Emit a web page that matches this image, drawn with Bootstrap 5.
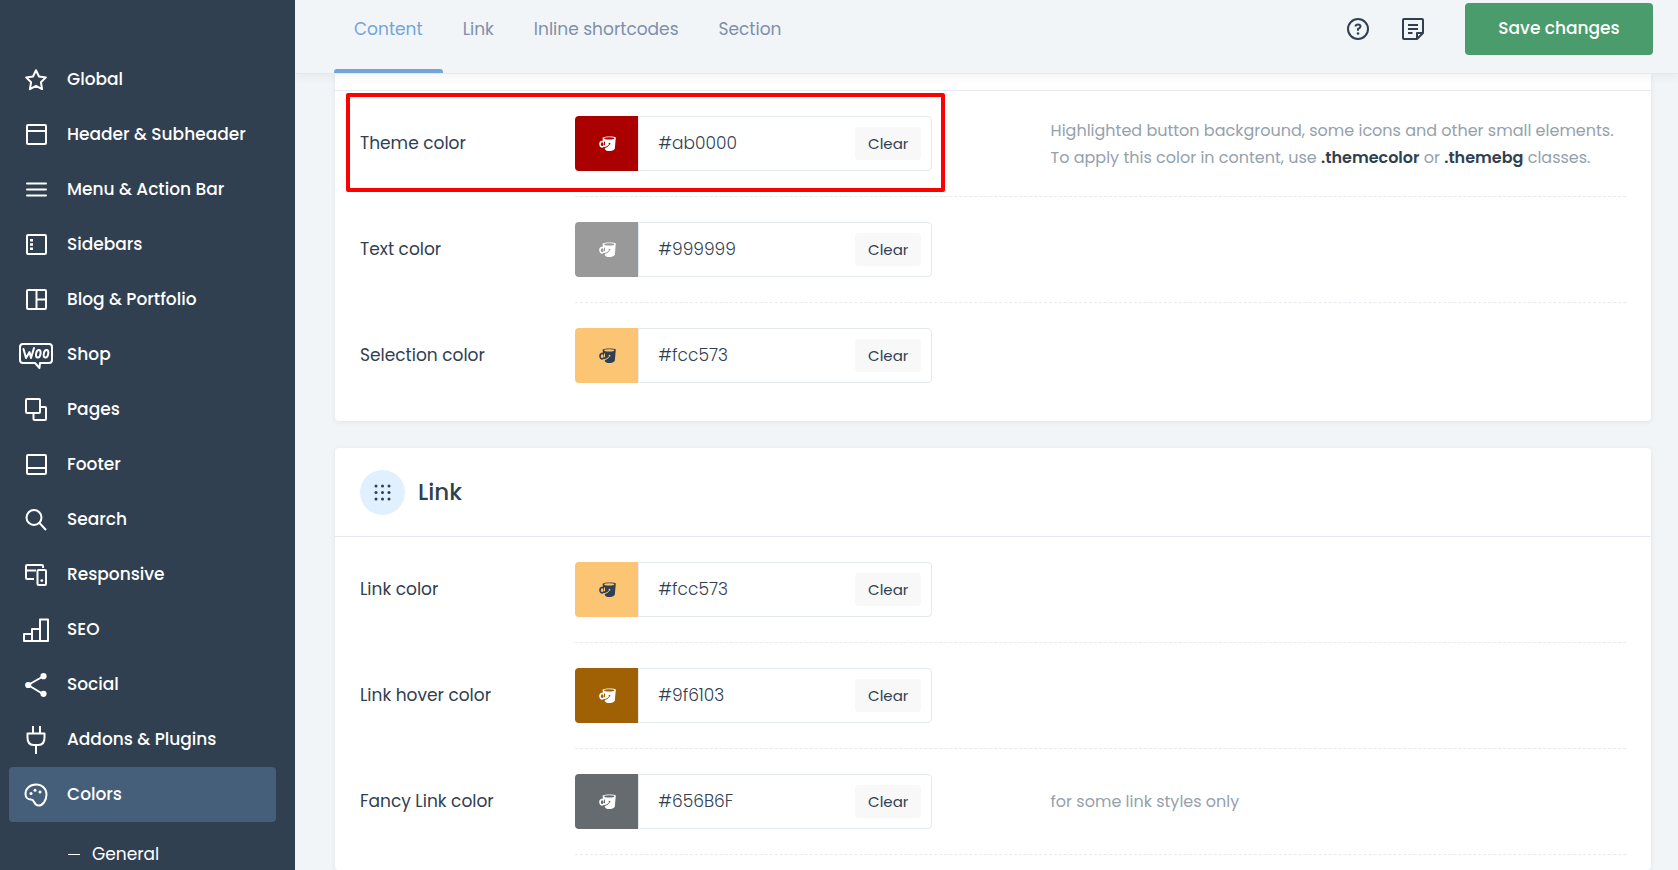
<!DOCTYPE html>
<html lang="en">
<head>
<meta charset="utf-8">
<meta name="viewport" content="width=device-width, initial-scale=1">
<title>Theme options – Colors</title>
<link href="https://cdn.jsdelivr.net/npm/bootstrap@5.3.0/dist/css/bootstrap.min.css" rel="stylesheet">
<style>
  :root { --ink: #304050; --line: #e4e9ee; --accent: #72a5d8; }
  body { font-family: Poppins, Inter, "Open Sans", sans-serif; font-size: 17px; line-height: 27px; color: var(--ink); background: #f1f5f8; }
  svg { display: block; fill: none; stroke: currentColor; stroke-width: 2; stroke-linejoin: round; }
  .side { width: 295px; background: var(--ink); padding: 52px 19px 0 9px; }
  .side .nav-link { height: 55px; color: #fff; font-weight: 500; padding: 0; border-radius: 4px; }
  .side .nav-link.active { background: #455f7a; }
  .side .ico { width: 54px; display: flex; justify-content: center; margin-right: 4px; }
  .side .sub-link { color: #fff; height: 64px; padding-left: 59px; gap: 12px; text-decoration: none; }
  .side .dash { width: 12px; height: 1px; background: #fff; }
  .topbar { height: 74px; border-bottom: 1px solid var(--line); box-shadow: 0 3px 8px rgba(48,64,80,.06); padding: 0 25px 0 39px; z-index: 1; background: #f1f5f8; }
  .tabs .nav-link { padding: 16px 20px 30px; color: #7f8fab; }
  .tabs .nav-link.active { color: var(--accent); position: relative; }
  .tabs .nav-link.active::after { content: ""; position: absolute; left: 0; right: 0; bottom: 0; height: 4px; background: var(--accent); border-radius: 3px 3px 0 0; }
  .tools { height: 58px; }
  .tool { padding: 0; border: 0; background: none; color: var(--ink); margin-right: 33px; }
  .save { width: 188px; height: 52px; background: #4a9c6d; color: #fff; font-size: 17px; font-weight: 500; border-radius: 4px; margin-left: 8px; padding: 0; }
  .save:hover { background: #3f8a5f; color: #fff; }
  .panels { padding: 0 27px 0 40px; gap: 27px; }
  .panel { background: #fff; border-radius: 4px; box-shadow: 0 1px 5px rgba(48,64,80,.09); }
  .panel-first { border-radius: 0 0 4px 4px; padding-bottom: 13px; }
  .panel-first .panel-head { height: 17px; }
  .panel-head { height: 89px; border-bottom: 1px solid #e8eaf3; padding: 0 25px; gap: 13px; }
  .panel-head h2 { font-size: 23px; font-weight: 500; line-height: 34px; margin: 0; }
  .bubble { width: 45px; height: 45px; background: #e1f0ff; }
  .opt { display: grid; grid-template-columns: 17% 1fr; padding: 0 25px; position: relative; }
  .opt-label { padding-top: 39px; }
  .opt-body { display: grid; grid-template-columns: 19fr 23fr; padding: 25px 0; border-bottom: 1px dashed #e8eaf0; align-items: center; }
  .opt:last-child .opt-body { border-bottom: 0; }
  .panel-rest .opt:last-child .opt-body { border-bottom: 1px dashed #e8eaf0; }
  .picker { width: 357px; height: 55px; flex-wrap: nowrap; }
  .swatch { width: 63px; border: 0; border-radius: 4px 0 0 4px; padding: 0 0 0 2px; background: var(--sw); color: #fff; display: flex; align-items: center; justify-content: center; }
  .swatch.light { color: var(--ink); }
  .picker-box { flex: 1; min-width: 0; border: 1px solid var(--line); border-radius: 0 4px 4px 0; padding: 0 10px 0 19px; }
  .picker-box input { flex: 1; min-width: 0; border: 0; outline: 0; padding: 0; color: var(--ink); font-weight: 300; background: none; }
  .clear { width: 66px; height: 33px; border: 0; border-radius: 4px; background: #f8f8f9; color: var(--ink); font-size: 15px; line-height: 21px; padding: 0; }
  .note { color: #95a1ac; font-size: 16px; margin: 0; white-space: nowrap; }
  .note b { color: var(--ink); font-weight: 600; }
  .marker { position: absolute; left: 11px; top: 2px; width: 599px; height: 99px; border: 4px solid #f00; border-radius: 2px; pointer-events: none; }
</style>
</head>
<body class="vh-100 overflow-hidden d-flex">

<svg width="0" height="0" class="position-absolute">
  <symbol id="cup" viewBox="0 0 17 16">
    <path fill="currentColor" stroke="none" d="M3.500 1.800C5 .2 15.300 -.2 16.800 1.500L15.800 12.800C14.600 15.300 7.800 15.900 6.200 13.800L5.700 12C2.500 12.600 .2 10.800 .2 8C.2 6 1.500 4.600 4 4.600Z"/>
    <ellipse cx="10.200" cy="2.400" rx="5" ry="1.100" fill="var(--sw)" stroke="none"/>
    <ellipse cx="3.200" cy="8.200" rx="1.300" ry="1.900" fill="var(--sw)" stroke="none"/>
    <path stroke="var(--sw)" stroke-width="1" d="M5.500 5.600V9.200M3.600 11.800C7 11.600 9.500 10.200 10.400 8.400"/>
    <circle cx="10.500" cy="7.700" r=".9" fill="var(--sw)" stroke="none"/>
  </symbol>
</svg>

<aside class="side flex-shrink-0 overflow-hidden">
  <nav class="nav flex-column flex-nowrap">
    <a class="nav-link d-flex align-items-center" href="#"><span class="ico"><svg width="24" height="24"><path d="M12 2.200l3 6.300 6.900.9-5 4.800 1.200 6.900L12 17.800l-6.100 3.300 1.200-6.900-5-4.800L9 8.500z"/></svg></span>Global</a>
    <a class="nav-link d-flex align-items-center" href="#"><span class="ico"><svg width="21" height="21"><rect x="1" y="1" width="19" height="19" rx="1"/><path d="M1 7H20"/></svg></span>Header &amp; Subheader</a>
    <a class="nav-link d-flex align-items-center" href="#"><span class="ico"><svg width="21" height="21"><path stroke-linecap="round" d="M1 4.500H20M1 10.500H20M1 16.500H20"/></svg></span>Menu &amp; Action Bar</a>
    <a class="nav-link d-flex align-items-center" href="#"><span class="ico"><svg width="21" height="21"><rect x="1" y="1" width="19" height="19" rx="1"/><path stroke="none" fill="currentColor" d="M4 5h3v2.600H4zM4 9.200h3v2.600H4zM4 13.500h3v2.600H4z"/></svg></span>Sidebars</a>
    <a class="nav-link d-flex align-items-center" href="#"><span class="ico"><svg width="21" height="21"><rect x="1" y="1" width="19" height="19" rx="1"/><path d="M10.500 1V20M10.500 10.500H20"/></svg></span>Blog &amp; Portfolio</a>
    <a class="nav-link d-flex align-items-center" href="#"><span class="ico"><svg width="36" height="28"><path d="M5 3H31Q34 3 34 6V19Q34 22 31 22H22L21.500 27 17 22H5Q2 22 2 19V6Q2 3 5 3Z"/><path stroke-linecap="round" d="M5.500 8L8 17L11.500 11L13 17L16 7"/><ellipse cx="20.300" cy="12.800" rx="2.200" ry="3.800" transform="rotate(12 20.300 12.800)"/><ellipse cx="28" cy="12.800" rx="2.200" ry="3.800" transform="rotate(12 28 12.800)"/></svg></span>Shop</a>
    <a class="nav-link d-flex align-items-center" href="#"><span class="ico"><svg width="24" height="24"><rect x="2" y="1" width="14" height="14" rx="1"/><path d="M16 9H21Q22 9 22 10V21Q22 22 21 22H10.500Q9.500 22 9.500 21V15"/></svg></span>Pages</a>
    <a class="nav-link d-flex align-items-center" href="#"><span class="ico"><svg width="21" height="21"><rect x="1" y="1" width="19" height="19" rx="1"/><path d="M1 14H20"/></svg></span>Footer</a>
    <a class="nav-link d-flex align-items-center" href="#"><span class="ico"><svg width="22" height="22"><circle cx="9" cy="8.500" r="7.500"/><path d="M14.500 14L21 21"/></svg></span>Search</a>
    <a class="nav-link d-flex align-items-center" href="#"><span class="ico"><svg width="24" height="24"><path d="M19 5V3Q19 2 18 2H3Q2 2 2 3V15Q2 16 3 16H10M2 7.500H12"/><rect x="13.500" y="7" width="8.500" height="15" rx="1"/><circle cx="17.800" cy="17.600" r="1.400" stroke="none" fill="currentColor"/></svg></span>Responsive</a>
    <a class="nav-link d-flex align-items-center" href="#"><span class="ico"><svg width="28" height="28"><path d="M2 18H10V25H2ZM10 13H18V25H10ZM18 3.500H26V25H18Z"/></svg></span>SEO</a>
    <a class="nav-link d-flex align-items-center" href="#"><span class="ico"><svg width="22" height="24"><path d="M18 3.500L3 12L18 21"/><g fill="currentColor" stroke="none"><circle cx="18.500" cy="3.200" r="3.100"/><circle cx="3.200" cy="12" r="3.100"/><circle cx="18.500" cy="20.800" r="3.100"/></g></svg></span>Social</a>
    <a class="nav-link d-flex align-items-center" href="#"><span class="ico"><svg width="22" height="28"><path d="M2.500 7.500H19.500V11.500Q19.500 19 13.500 19H8.500Q2.500 19 2.500 11.500ZM8 0V7M15 0V7M11 19V28"/></svg></span>Addons &amp; Plugins</a>
    <a class="nav-link active d-flex align-items-center" href="#" aria-current="page"><span class="ico"><svg width="24" height="24"><path d="M12 1.500C5.500 1.500 1.500 6 1.500 11C1.500 14.500 4 16.500 7 16.500C11 16.500 9.500 22.500 14.500 22.500C19 22.500 22.500 17 22.500 11.500C22.500 5.500 18 1.500 12 1.500Z"/><g fill="currentColor" stroke="none"><circle cx="7" cy="10.500" r="1.500"/><circle cx="11" cy="7.300" r="1.500"/><circle cx="16" cy="9" r="1.500"/></g></svg></span>Colors</a>
    <a class="sub-link d-flex align-items-center" href="#"><span class="dash"></span>General</a>
  </nav>
</aside>

<main class="flex-grow-1 d-flex flex-column overflow-hidden">
  <header class="topbar flex-shrink-0 d-flex justify-content-between align-items-start">
    <nav class="nav tabs">
      <a class="nav-link active" href="#" aria-current="true">Content</a>
      <a class="nav-link" href="#">Link</a>
      <a class="nav-link" href="#">Inline shortcodes</a>
      <a class="nav-link" href="#">Section</a>
    </nav>
    <div class="tools d-flex align-items-center">
      <button class="tool" type="button" aria-label="Help"><svg width="22" height="22"><circle cx="11" cy="11" r="10"/><path d="M8.500 8.500Q8.700 6.500 11 6.500T13.500 8.400Q13.500 9.700 11 11V12.800"/><circle cx="11" cy="15.500" r="1.300" fill="currentColor" stroke="none"/></svg></button>
      <button class="tool" type="button" aria-label="Notes"><svg width="22" height="22"><path d="M2 1H20Q21 1 21 2V15L15 21H2Q1 21 1 20V2Q1 1 2 1ZM21 15H15V21M6 7H16M6 11H16M6 15H10.500"/></svg></button>
      <button class="btn save" type="button">Save changes</button>
    </div>
  </header>

  <div class="panels flex-grow-1 d-flex flex-column">
    <section class="panel panel-first flex-shrink-0">
      <div class="panel-head"></div>
      <div class="opt">
        <label class="opt-label" for="c1">Theme color</label>
        <div class="opt-body">
          <div class="picker d-flex" style="--sw:#ab0000"><button class="swatch" type="button" aria-label="Pick theme color"><svg width="17" height="16"><use href="#cup"/></svg></button><div class="picker-box d-flex align-items-center"><input id="c1" type="text" value="#ab0000"><button class="clear" type="button">Clear</button></div></div>
          <p class="note">Highlighted button background, some icons and other small elements.<br>To apply this color in content, use <b>.themecolor</b> or <b>.themebg</b> classes.</p>
        </div>
        <div class="marker"></div>
      </div>
      <div class="opt">
        <label class="opt-label" for="c2">Text color</label>
        <div class="opt-body">
          <div class="picker d-flex" style="--sw:#999999"><button class="swatch" type="button" aria-label="Pick text color"><svg width="17" height="16"><use href="#cup"/></svg></button><div class="picker-box d-flex align-items-center"><input id="c2" type="text" value="#999999"><button class="clear" type="button">Clear</button></div></div>
        </div>
      </div>
      <div class="opt">
        <label class="opt-label" for="c3">Selection color</label>
        <div class="opt-body">
          <div class="picker d-flex" style="--sw:#fcc573"><button class="swatch light" type="button" aria-label="Pick selection color"><svg width="17" height="16"><use href="#cup"/></svg></button><div class="picker-box d-flex align-items-center"><input id="c3" type="text" value="#fcc573"><button class="clear" type="button">Clear</button></div></div>
        </div>
      </div>
    </section>

    <section class="panel panel-rest flex-grow-1">
      <div class="panel-head d-flex align-items-center">
        <span class="bubble rounded-circle d-flex align-items-center justify-content-center"><svg width="17" height="17" style="stroke:none;fill:currentColor"><g id="dots"><circle cx="2" cy="2" r="1.500"/><circle cx="8.500" cy="2" r="1.500"/><circle cx="15" cy="2" r="1.500"/></g><use href="#dots" y="6.500"/><use href="#dots" y="13"/></svg></span>
        <h2>Link</h2>
      </div>
      <div class="opt">
        <label class="opt-label" for="c4">Link color</label>
        <div class="opt-body">
          <div class="picker d-flex" style="--sw:#fcc573"><button class="swatch light" type="button" aria-label="Pick link color"><svg width="17" height="16"><use href="#cup"/></svg></button><div class="picker-box d-flex align-items-center"><input id="c4" type="text" value="#fcc573"><button class="clear" type="button">Clear</button></div></div>
        </div>
      </div>
      <div class="opt">
        <label class="opt-label" for="c5">Link hover color</label>
        <div class="opt-body">
          <div class="picker d-flex" style="--sw:#9f6103"><button class="swatch" type="button" aria-label="Pick link hover color"><svg width="17" height="16"><use href="#cup"/></svg></button><div class="picker-box d-flex align-items-center"><input id="c5" type="text" value="#9f6103"><button class="clear" type="button">Clear</button></div></div>
        </div>
      </div>
      <div class="opt">
        <label class="opt-label" for="c6">Fancy Link color</label>
        <div class="opt-body">
          <div class="picker d-flex" style="--sw:#656b6f"><button class="swatch" type="button" aria-label="Pick fancy link color"><svg width="17" height="16"><use href="#cup"/></svg></button><div class="picker-box d-flex align-items-center"><input id="c6" type="text" value="#656B6F"><button class="clear" type="button">Clear</button></div></div>
          <p class="note">for some link styles only</p>
        </div>
      </div>
    </section>
  </div>
</main>

<script src="https://cdn.jsdelivr.net/npm/bootstrap@5.3.0/dist/js/bootstrap.bundle.min.js"></script>
</body>
</html>
